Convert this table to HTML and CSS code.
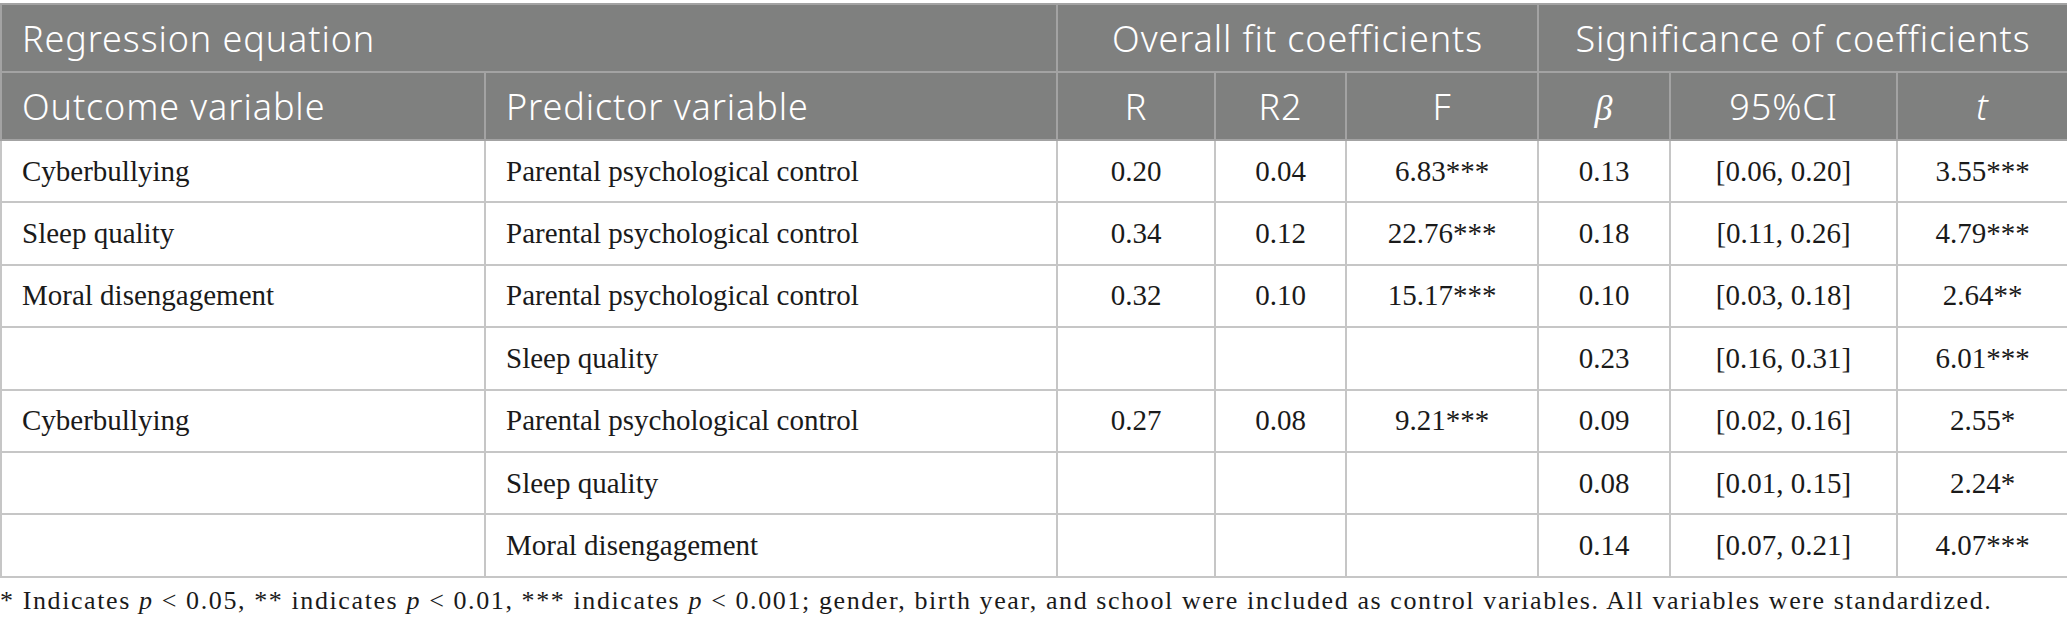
FILE: index.html
```html
<!DOCTYPE html>
<html lang="en">
<head>
<meta charset="utf-8">
<title>Regression table</title>
<link rel="stylesheet" href="styles.css">
</head>
<body>
<div class="wrap">
<table class="reg">
  <colgroup>
    <col class="c-out"><col class="c-pred"><col class="c-r"><col class="c-r2"><col class="c-f"><col class="c-b"><col class="c-ci"><col class="c-t">
  </colgroup>
  <thead>
    <tr>
      <th colspan="2" class="left">Regression equation</th>
      <th colspan="3">Overall fit coefficients</th>
      <th colspan="3">Significance of coefficients</th>
    </tr>
    <tr>
      <th class="left">Outcome variable</th>
      <th class="left">Predictor variable</th>
      <th>R</th>
      <th>R2</th>
      <th>F</th>
      <th><span class="beta">β</span></th>
      <th>95%CI</th>
      <th><span class="ital">t</span></th>
    </tr>
  </thead>
  <tbody>
    <tr><td class="left">Cyberbullying</td><td class="left">Parental psychological control</td><td>0.20</td><td>0.04</td><td>6.83***</td><td>0.13</td><td>[0.06, 0.20]</td><td>3.55***</td></tr>
    <tr><td class="left">Sleep quality</td><td class="left">Parental psychological control</td><td>0.34</td><td>0.12</td><td>22.76***</td><td>0.18</td><td>[0.11, 0.26]</td><td>4.79***</td></tr>
    <tr><td class="left">Moral disengagement</td><td class="left">Parental psychological control</td><td>0.32</td><td>0.10</td><td>15.17***</td><td>0.10</td><td>[0.03, 0.18]</td><td>2.64**</td></tr>
    <tr><td class="left"></td><td class="left">Sleep quality</td><td></td><td></td><td></td><td>0.23</td><td>[0.16, 0.31]</td><td>6.01***</td></tr>
    <tr><td class="left">Cyberbullying</td><td class="left">Parental psychological control</td><td>0.27</td><td>0.08</td><td>9.21***</td><td>0.09</td><td>[0.02, 0.16]</td><td>2.55*</td></tr>
    <tr><td class="left"></td><td class="left">Sleep quality</td><td></td><td></td><td></td><td>0.08</td><td>[0.01, 0.15]</td><td>2.24*</td></tr>
    <tr><td class="left"></td><td class="left">Moral disengagement</td><td></td><td></td><td></td><td>0.14</td><td>[0.07, 0.21]</td><td>4.07***</td></tr>
  </tbody>
</table>
<p class="note">* Indicates <i>p</i> &lt; 0.05, ** indicates <i>p</i> &lt; 0.01, *** indicates <i>p</i> &lt; 0.001; gender, birth year, and school were included as control variables. All variables were standardized.</p>
</div>
</body>
</html>
```
FILE: styles.css
```css
html, body {
  margin: 0;
  padding: 0;
  background: #ffffff;
}
.wrap {
  padding: 3px 0 0 0;
}
.reg {
  border-collapse: collapse;
  table-layout: fixed;
  width: 2067px;
  font-family: "Liberation Serif", "Times New Roman", serif;
  font-size: 29px;
  color: #1a1a1a;
}
.c-out { width: 484px; }
.c-pred { width: 572px; }
.c-r { width: 158px; }
.c-r2 { width: 131px; }
.c-f { width: 192px; }
.c-b { width: 132px; }
.c-ci { width: 227px; }
.c-t { width: 171px; }

.reg th {
  background: #7f807f;
  color: #ffffff;
  font-family: "Noto Sans", "Open Sans", sans-serif;
  font-weight: 300;
  font-size: 36px;
  letter-spacing: 0.9px;
  height: 66px;
  padding: 0 20px;
  border: 2px solid #a3a3a3;
  text-align: center;
  white-space: nowrap;
}
.reg td {
  height: 60.4px;
  padding: 0 20px;
  border: 2px solid #c6c6c6;
  text-align: center;
  white-space: nowrap;
}
.reg .left {
  text-align: left;
}
.beta {
  font-family: "Liberation Serif", serif;
  font-style: italic;
}
.ital {
  font-style: italic;
}
.note {
  margin: 8px 0 0 0;
  font-family: "Liberation Serif", "Times New Roman", serif;
  font-size: 26px;
  letter-spacing: 1.6px;
  color: #1a1a1a;
}
```
